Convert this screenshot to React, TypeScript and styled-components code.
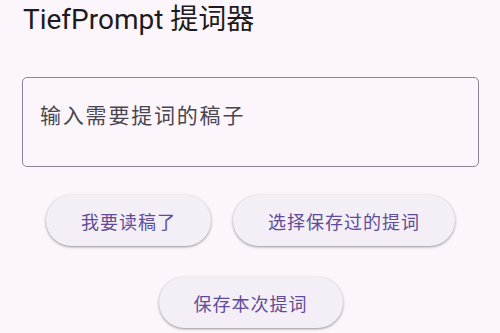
import styled, { createGlobalStyle } from "styled-components"

const GlobalStyle = createGlobalStyle`
    html, body {
        margin: 0;
        padding: 0;
        background: #FCF6FC;
    }
    * {
        box-sizing: border-box;
    }
`

const Page = styled.div`
    width: 500px;
    height: 333px;
    overflow: hidden;
    padding: 0 21px 0 22px;
    display: flex;
    flex-direction: column;
    font-family: Roboto, "Noto Sans CJK SC", sans-serif;
`

const Title = styled.h1`
    flex-shrink: 0;
    margin: 2px 0 0 1px;
    font-size: 28px;
    line-height: 36px;
    font-weight: 400;
    color: #1D1B20;
`

const PromptField = styled.div`
    flex-shrink: 0;
    margin-top: 39px;
    height: 90px;
    border: 1.5px solid #8A8590;
    border-radius: 5px;
    padding: 23px 17px 0;
`

const Placeholder = styled.span`
    font-size: 21px;
    line-height: 30px;
    letter-spacing: 1.8px;
    color: #4A4650;
`

const ButtonGroup = styled.div`
    flex-shrink: 0;
    margin-top: 28px;
    display: flex;
    flex-wrap: wrap;
    justify-content: center;
    column-gap: 22px;
    row-gap: 31px;
`

const PillButton = styled.button`
    height: 51px;
    padding: 0 35px;
    border: none;
    border-radius: 26px;
    background: #F4EEF6;
    box-shadow: 0 1px 2px rgba(0, 0, 0, 0.28), 0 1px 3px 1px rgba(0, 0, 0, 0.1);
    font-family: Roboto, "Noto Sans CJK SC", sans-serif;
    font-size: 18px;
    letter-spacing: 1px;
    color: #5F4C98;
    cursor: pointer;
`

export default function App() {
    return (
        <>
            <GlobalStyle />
            <Page>
                <Title>TiefPrompt 提词器</Title>
                <PromptField>
                    <Placeholder>输入需要提词的稿子</Placeholder>
                </PromptField>
                <ButtonGroup>
                    <PillButton>我要读稿了</PillButton>
                    <PillButton>选择保存过的提词</PillButton>
                    <PillButton>保存本次提词</PillButton>
                </ButtonGroup>
            </Page>
        </>
    )
}
